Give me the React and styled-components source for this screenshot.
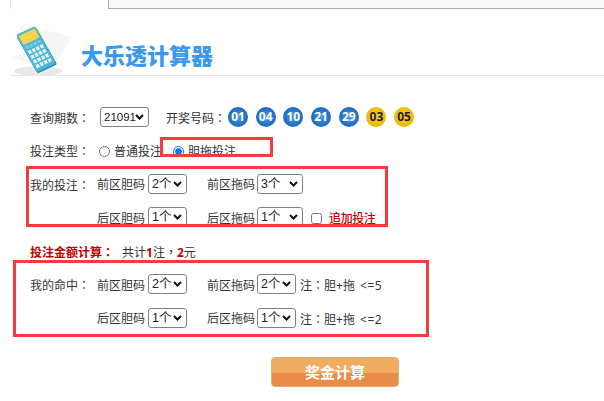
import React from "react";
import styled, { createGlobalStyle } from "styled-components";

const chevron = "url(\"data:image/svg+xml,%3Csvg xmlns='http://www.w3.org/2000/svg' width='9' height='6' viewBox='0 0 9 6'%3E%3Cpath d='M1 1 L4.5 4.5 L8 1' fill='none' stroke='%23111' stroke-width='2'/%3E%3C/svg%3E\")";

const Global = createGlobalStyle`
  html, body { margin: 0; padding: 0; background: #fff; overflow: hidden; }
  body { font: 12px/1.2 "Noto Sans", "Noto Sans CJK SC", sans-serif; color: #333; }
`;
const Page = styled.div`position: relative; width: 604px; height: 401px; overflow: hidden;`;
const TopBar = styled.div`display: flex; height: 9px; margin-left: 10px; border-left: 1px solid #e4e4e4;`;
const TabFill = styled.div`flex: 1; margin-left: 97px; background: #f8f8f8; border-left: 1px solid #aaa; border-bottom: 1px solid #aaa;`;
const Header = styled.header`display: flex; align-items: flex-start; height: 66px; margin-left: 10px; border-bottom: 1px solid #e6e6e6;`;
const Logo = styled.svg`width: 64px; height: 52px; margin: 15px 0 0 1px; flex: none;`;
const Title = styled.h1`margin: 33px 0 0 6px; font: 900 22px/24px "Noto Sans CJK SC", sans-serif; color: #3a98ee;`;
const Form = styled.main`padding: 24px 0 0 30px;`;
const Row = styled.div`display: flex; align-items: center; height: 33.5px; white-space: nowrap;`;
const Label = styled.span`flex: none; width: ${p => p.$w || 67}px; margin-left: ${p => p.$ml || 0}px; padding-top: 3px;`;
const Colon = styled.span`font-family: "Noto Sans CJK TC", sans-serif;`;
const Field = styled.span`flex: none; display: inline-flex; align-items: center; gap: ${p => p.$gap || 3}px; margin-left: ${p => p.$ml || 0}px;`;
const FieldName = styled.span`padding-top: 3px;`;
const Select = styled.select`
  appearance: none;
  width: ${p => p.$w}px; height: 20px; padding: 0 0 0 3px; box-sizing: border-box;
  font: ${p => p.$fs || 12.5}px "Liberation Sans", "Noto Sans CJK SC", sans-serif; color: #222;
  background: #fff ${chevron} no-repeat right 4px center;
  border: 1px solid #808080; border-radius: 3px;
`;
const Balls = styled.span`display: inline-flex; gap: 7.7px;`;
const Ball = styled.span`
  width: 20px; height: 20px; border-radius: 50%; display: flex; align-items: center; justify-content: center;
  font: 700 12px "Noto Sans", sans-serif;
  color: ${p => p.$y ? "#1d1a3d" : "#fff"};
  background: ${p => p.$y
    ? "radial-gradient(circle at 50% 45%, #f9cf1e 0, #f2bb08 60%, #d69a00 100%)"
    : "radial-gradient(circle at 50% 50%, #4a9ae6 0, #2572c9 55%, #1a55a5 100%)"};
`;
const Radio = styled.label`display: inline-flex; align-items: center; gap: 4px; margin-right: ${p => p.$mr || 0}px; padding-top: 3px;`;
const RadioInput = styled.input`width: 11px; height: 11px; margin: 0;`;
const Check = styled.input`width: 11px; height: 11px; margin: 3px 7px 0 8px;`;
const Strong = styled.b`color: #c00000; font-weight: 700;`;
const Extra = styled.span`color: #c00000; font-weight: 500; letter-spacing: -.4px; padding-top: 3px;`;
const Note = styled.span`margin-left: 4px; padding-top: 3px; word-spacing: 2px;`;
const Compare = styled.span`letter-spacing: .5px;`;
const Summary = styled.span`padding-top: 3px;`;
const Total = styled.span`margin-left: 8px;`;
const ButtonRow = styled.div`padding: 22px 0 0 241px;`;
const Button = styled.button`
  display: block; width: 128px; height: 30px; padding: 0; border: 1px solid #e3b06f; border-radius: 4px;
  background: linear-gradient(#f0ad62 0 52%, #ea8c49 52% 100%);
  color: #fff; font: 700 15px "Noto Sans CJK SC", sans-serif;
`;
const RedBox = styled.div`
  position: absolute; box-sizing: border-box; border: 3px solid #f53b3b;
  left: ${p => p.$x}px; top: ${p => p.$y}px; width: ${p => p.$w}px; height: ${p => p.$h}px;
`;

const Opt = ({ v, w }) => (
  <Select $w={w} defaultValue={v}>
    {["1个", "2个", "3个"].map(o => <option key={o}>{o}</option>)}
  </Select>
);

const Calculator = () => (
  <Logo viewBox="0 0 64 52">
    <ellipse cx="27" cy="47" rx="24" ry="5" fill="#e8e8e8" />
    <path d="M34 6 L61 13 L46 36 L30 42 L1 34 L22 24 Z" fill="#f5f5f5" />
    <g transform="matrix(.19 -.09 .21 .37 5 11)">
      <rect x="-2" y="4" width="104" height="100" rx="7" fill="#2c93bd" />
      <rect width="100" height="100" rx="7" fill="#4fb6d8" />
      <rect x="8" y="5" width="84" height="24" rx="2" fill="#f8d44a" />
      {[0, 1, 2, 3].map(c => <rect key={c} x={10 + c * 21} y={34} width={15} height={7} fill="#7fcbd8" />)}
      {[0, 1, 2, 3].flatMap(r => [0, 1, 2, 3].map(c => (
        <rect key={`${r}${c}`} x={10 + c * 21} y={46 + r * 12.5} width={15} height={8.5} fill="#e4f5f8" />
      )))}
    </g>
  </Logo>
);

export default function App() {
  return (
    <Page>
      <Global />
      <TopBar><TabFill /></TopBar>
      <Header>
        <Calculator />
        <Title>大乐透计算器</Title>
      </Header>
      <Form>
        <Row>
          <Label $w={70}>查询期数<Colon>：</Colon></Label>
          <Select $w={49} $fs={11.5} defaultValue="21091"><option>21091</option></Select>
          <Label $w={62} $ml={17}>开奖号码<Colon>：</Colon></Label>
          <Balls>
            {["01", "04", "10", "21", "29"].map(n => <Ball key={n}>{n}</Ball>)}
            {["03", "05"].map(n => <Ball key={n} $y>{n}</Ball>)}
          </Balls>
        </Row>
        <Row>
          <Label $w={69}>投注类型<Colon>：</Colon></Label>
          <Radio $mr={11}><RadioInput type="radio" name="t" />普通投注</Radio>
          <Radio><RadioInput type="radio" name="t" defaultChecked />胆拖投注</Radio>
        </Row>
        <Row>
          <Label>我的投注<Colon>：</Colon></Label>
          <Field><FieldName>前区胆码</FieldName><Opt v="2个" w={39} /></Field>
          <Field $ml={20} $gap={2}><FieldName>前区拖码</FieldName><Opt v="3个" w={46} /></Field>
        </Row>
        <Row>
          <Label />
          <Field><FieldName>后区胆码</FieldName><Opt v="1个" w={39} /></Field>
          <Field $ml={20} $gap={2}><FieldName>后区拖码</FieldName><Opt v="1个" w={46} /></Field>
          <Check type="checkbox" />
          <Extra>追加投注</Extra>
        </Row>
        <Row>
          <Summary>
            <Strong>投注金额计算<Colon>：</Colon></Strong>
            <Total>共计<Strong>1</Strong>注<Colon>，</Colon><Strong>2</Strong>元</Total>
          </Summary>
        </Row>
        <Row>
          <Label>我的命中<Colon>：</Colon></Label>
          <Field><FieldName>前区胆码</FieldName><Opt v="2个" w={39} /></Field>
          <Field $ml={20} $gap={2}><FieldName>前区拖码</FieldName><Opt v="2个" w={39} /></Field>
          <Note>注<Colon>：</Colon>胆+拖 <Compare>&lt;=5</Compare></Note>
        </Row>
        <Row>
          <Label />
          <Field><FieldName>后区胆码</FieldName><Opt v="1个" w={39} /></Field>
          <Field $ml={20} $gap={2}><FieldName>后区拖码</FieldName><Opt v="1个" w={39} /></Field>
          <Note>注<Colon>：</Colon>胆+拖 <Compare>&lt;=2</Compare></Note>
        </Row>
        <ButtonRow><Button>奖金计算</Button></ButtonRow>
      </Form>
      <RedBox $x={160} $y={137} $w={113} $h={20} />
      <RedBox $x={26} $y={166} $w={362} $h={61} />
      <RedBox $x={13} $y={260} $w={416} $h={77} />
    </Page>
  );
}
